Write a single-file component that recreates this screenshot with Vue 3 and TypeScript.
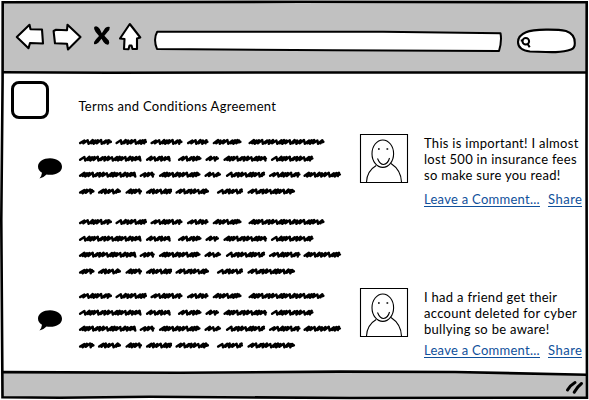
<script setup lang="ts">
type Word = [start: number, end: number]

const scribbleRows: Word[][] = [
  [[0, 33], [36.5, 68], [71.5, 103.5], [108, 129.5], [133.7, 162.5], [169.5, 245.5]],
  [[0, 62], [67, 91.5], [99, 122.5], [126.5, 140], [144.5, 188], [192, 234.5]],
  [[0, 56.5], [60.7, 75.7], [80, 121.5], [125.5, 142], [147, 186], [190, 221.5], [224.5, 262]],
  [[0, 15.5], [19, 42], [46.5, 63], [67, 93], [96.5, 130], [138, 164], [168.5, 216]],
]
const rowCentres = [9, 25.7, 41.7, 58.5]
const gaps = [3.3, 5.1, 2.6, 2.5, 3.2, 4.9, 2.4, 3.6]

function scribble([start, end]: Word, row: number): string {
  const y = rowCentres[row]
  const last = end - 1.1
  let x = start + 1.1
  let step = Math.round(start) + row
  let d = `M${x} ${y + 1.1}`
  while (x < last - 4) {
    const gap = gaps[step % gaps.length]
    const top = Math.min(x + 4.3, last)
    const peak = y - 1.5 - (step % 3) * 0.25
    const dip = y + 1.3 + (step % 2) * 0.5
    d += ` L${top.toFixed(1)} ${peak.toFixed(1)} L${(x + gap).toFixed(1)} ${dip.toFixed(1)}`
    x += gap
    step++
  }
  return `${d} L${(last - 1.4).toFixed(1)} ${(y - 1.5).toFixed(1)} L${last - 1.6} ${y + 0.4} L${last} ${y - 0.2}`
}
const strokes = scribbleRows.flatMap((words, row) => words.map((word) => scribble(word, row)))

const articles = [
  {
    paragraphs: 2,
    lines: ['This is important! I almost', 'lost 500 in insurance fees', 'so make sure you read!'],
  },
  {
    paragraphs: 1,
    lines: ['I had a friend get their', 'account deleted for cyber', 'bullying so be aware!'],
  },
]
</script>

<template>
  <div class="window">
    <header class="toolbar">
      <svg class="nav" width="140" height="40" viewBox="0 0 140 40">
        <g fill="#fff" stroke="#000" stroke-width="2.1" stroke-linejoin="round">
          <path d="M16.8 37 29.5 24.8 30.5 29.2 42 29.5 43 43.5 30 43 28.5 48.2Z" transform="translate(0-17)" />
          <path d="M53.6 31 56 29.8 67 30.2 67.5 24.7 80.5 37 68 49.5 67 43.8 55 43.3Z" transform="translate(0-17)" />
          <path d="M129.8 24 140.3 37.5 137 38.5 137 49 132.5 49 131.5 45.5 129.5 45.5 128.5 49.3 124 49 124.5 39 120 38.5Z" transform="translate(0-17)" />
        </g>
        <path d="M94.2 10Q97 8 99.8 12L101.8 16.2 105.2 11Q108 9 109.8 10Q110 13 107.5 15L104.4 18.8 108.8 23.5Q110 26 108.2 27.7Q105.5 28 103.5 25L101.5 21.8 98.5 25.5Q96 28 94 27Q93.5 25 96 22.3L99 19 95.5 14.8Q93.5 12 94.2 10Z" />
      </svg>
      <svg class="address" width="350" height="24" viewBox="0 0 350 24">
        <path d="M4.2 2.7 230 2.8 347.5 4.2Q349 12 346 22L180 21.2 4 20Q0 10 4.2 2.7Z" fill="#fff" stroke="#000" stroke-width="2" stroke-linejoin="round" />
      </svg>
      <svg class="search" width="62" height="28" viewBox="0 0 62 28">
        <path d="M10 4.2C18 .8 42 1.2 50 3Q59 6 58.8 15Q59 20 55 21.5C44 25.5 30 24 14 23.5Q2 22 2 14Q2 7.5 10 4.2Z" fill="#fff" stroke="#000" stroke-width="2.1" />
        <circle cx="9.8" cy="13.2" r="3.3" fill="none" stroke="#000" stroke-width="2" />
        <path d="m11.5 15.8 2.2 3.4M5.8 11.5v2" fill="none" stroke="#000" stroke-width="2.1" />
      </svg>
    </header>

    <main>
      <div class="heading">
        <span class="checkbox"></span>
        <h1>Terms and Conditions Agreement</h1>
      </div>
      <section v-for="(article, index) in articles" :key="index" class="article">
        <svg class="bubble" width="26" height="24" viewBox="0 0 26 24">
          <path d="M13 1.3C20 1.3 25 5 25 9.7S20 17.8 13 17.8Q11 17.8 9.5 17.6Q7 20.5 2.5 21.5Q4.8 18.5 5 15.8Q1 13.5 1 9.5C1 4.8 6.5 1.3 13 1.3Z" />
        </svg>
        <div class="copy">
          <svg v-for="n in article.paragraphs" :key="n" class="scribble" width="266" height="68" viewBox="0 0 266 68">
            <path v-for="(d, i) in strokes" :key="i" :d="d" />
          </svg>
        </div>
        <svg class="avatar" width="48" height="49" viewBox="0 0 48 49">
          <path d="M.5.5h47v48H.5Z" />
          <ellipse cx="22.8" cy="19.7" rx="10.8" ry="13.7" />
          <path d="M6.5 48Q7 37 16.2 31.5M31 29.5Q41 36 41.5 48M17.5 24.5Q20 30.5 23.5 30.5Q28 30 29.5 24" />
          <path d="M18 15h1.7M26.5 15h1.7" stroke-width="1.7" />
        </svg>
        <div class="comment">
          <p v-for="(line, i) in article.lines" :key="i">{{ line }}</p>
          <nav><a>Leave a Comment...</a><a>Share</a></nav>
        </div>
      </section>
    </main>

    <footer>
      <svg width="18" height="16" viewBox="0 0 18 16">
        <path d="M1.5 11Q4 6.5 9 3.5M8.2 13.2Q11 8 15.5 4.5" fill="none" stroke="#000" stroke-width="3" stroke-linecap="round" />
      </svg>
    </footer>
    <svg class="frame" width="589" height="400" viewBox="0 0 589 400">
      <path d="M3 372 180 372.8 340 371.6 455 372 587 374.7V397.7L350 398 150 396.8 60 397.8 2.5 397.3Z" class="shade" />
      <path d="M0 0H589V400H0ZM2.7 2.2V80L1.3 220 2.5 397.3 60 397.8 150 396.8 350 398 587 397.7 586.5 150 586.7 2.2 300 1.8Z" class="outside" />
      <path d="M2.7 2.2 300 1.8 586.7 2.2 586.5 150 587 397.7 350 398 150 396.8 60 397.8 2.5 397.3 1.3 220 2.6 80Z" />
      <path d="M3 72.2 110 72.8 300 72.5 587 72.5M3 372.1 180 372.8 340 371.6 455 372 587 374.7" />
    </svg>
  </div>
</template>

<style>
body { margin: 0; background: #fff; }
</style>

<style scoped>
.window {
  position: relative;
  display: flex;
  flex-direction: column;
  width: 589px;
  height: 400px;
  overflow: hidden;
  background: #fff;
  color: #000;
  font: 13px/16px Lato, "Noto Sans", sans-serif;
}
svg { display: block; flex: none; overflow: visible; }
.toolbar {
  display: flex;
  align-items: flex-start;
  box-sizing: border-box;
  height: 72px;
  padding-top: 17px;
  background: #c1c1c1;
}
.address { margin: 12px 0 0 13px; }
.search { margin: 11px 0 0 13px; }
main { flex: 1; }
.heading { display: flex; height: 58px; }
.checkbox {
  box-sizing: border-box;
  width: 38px;
  height: 38px;
  margin: 9px 0 0 11px;
  border: 3px solid #000;
  border-radius: 8px;
}
h1 {
  margin: 26px 0 0 29.5px;
  font: inherit;
  letter-spacing: .28px;
}
.article {
  display: grid;
  grid-template-columns: 42px 281px 64px 165px;
  height: 154px;
  padding-left: 37px;
  padding-top: 3px;
  box-sizing: border-box;
}
.article + .article { height: 86px; }
.bubble { margin-top: 24px; }
.article + .article .bubble { margin-top: 22px; }
.copy { display: flex; flex-direction: column; gap: 12px; }
.scribble { fill: none; stroke: #000; stroke-width: 2.4; stroke-linecap: round; stroke-linejoin: round; }
.avatar { margin-top: 1px; fill: none; stroke: #000; stroke-width: 1.1; }
.comment { padding-top: 2px; }
.comment p { margin: 0; white-space: nowrap; letter-spacing: .29px; }
nav { display: flex; gap: 8px; margin-top: 8px; color: #10509b; white-space: nowrap; letter-spacing: .27px; }
nav a:last-child { letter-spacing: .5px; }
.article + .article nav { margin-top: 5px; }
a { height: 15px; line-height: 16px; border-bottom: 1px solid #10509b; }
footer { display: flex; justify-content: flex-end; height: 28px; padding-right: 5px; position: relative; z-index: 2; }
footer svg { margin-top: 7px; }
.frame { position: absolute; inset: 0; fill: none; stroke: #000; stroke-width: 2.6; pointer-events: none; }
.frame .shade { fill: #c1c1c1; stroke: none; }
.frame .outside { fill: #fff; fill-rule: evenodd; stroke: none; }
</style>
